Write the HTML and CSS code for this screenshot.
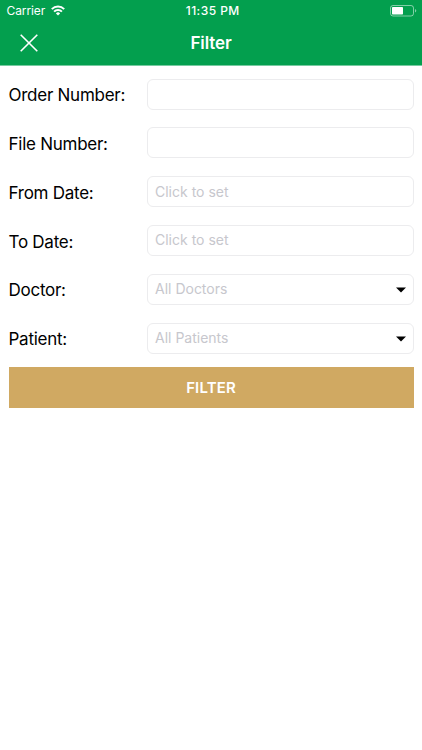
FILE: index.html
```html
<!DOCTYPE html>
<html lang="en">
<head>
<meta charset="utf-8">
<title>Filter</title>
<link rel="stylesheet" href="styles.css">
</head>
<body>
<header class="header">
  <div class="status">
    <div class="carrier"><span>Carrier</span>
      <svg width="14" height="11" viewBox="0 0 14 11" fill="none" stroke="#fff" stroke-width="2"><path d="M.8 4.1a8.8 8.8 0 0 1 12.4 0M3.1 6.6a5.5 5.5 0 0 1 7.8 0"/><path d="M4.9 8.4a3 3 0 0 1 4.2 0L7 10.5z" fill="#fff" stroke="none"/></svg>
    </div>
    <span class="time">11:35 PM</span>
    <svg class="battery" width="27" height="12" viewBox="0 0 27 12"><rect x=".5" y=".5" width="23" height="10.5" rx="2.5" fill="none" stroke="#fff" stroke-opacity=".5"/><rect x="2" y="2" width="11" height="7.5" rx=".7" fill="#fff"/><path d="M25 4v3.6q1.3-.5 1.3-1.8T25 4z" fill="#fff" fill-opacity=".5"/></svg>
  </div>
  <div class="navbar">
    <svg class="close" width="18" height="18" viewBox="0 0 18 18" stroke="#fff" stroke-width="1.6"><path d="M.7.7l16.6 16.6M17.3.7L.7 17.3"/></svg>
    <h1 class="title">Filter</h1>
    <span></span>
  </div>
</header>
<main class="form">
  <div class="row"><span class="label">Order Number:</span><div class="field"></div></div>
  <div class="row"><span class="label">File Number:</span><div class="field"></div></div>
  <div class="row"><span class="label">From Date:</span><div class="field"><span class="hint">Click to set</span></div></div>
  <div class="row"><span class="label">To Date:</span><div class="field"><span class="hint">Click to set</span></div></div>
  <div class="row"><span class="label">Doctor:</span><div class="field"><span class="hint">All Doctors</span><svg class="arrow" width="10" height="6" viewBox="0 0 10 6"><path d="M0 .4h10L5 5.6z"/></svg></div></div>
  <div class="row"><span class="label">Patient:</span><div class="field"><span class="hint">All Patients</span><svg class="arrow" width="10" height="6" viewBox="0 0 10 6"><path d="M0 .4h10L5 5.6z"/></svg></div></div>
  <div class="submit">FILTER</div>
</main>
</body>
</html>
```
FILE: styles.css
```css
* { box-sizing: border-box; }
body { margin: 0; background: #fff; color: #000; font-family: Inter, "Liberation Sans", sans-serif; }
svg { display: block; flex: none; }
.header { height: 66px; background: #039f4e; color: #fff; border-bottom: 1px solid #76caa0; }
.status { height: 21.5px; padding: 0 5px 0 6.5px; display: grid; grid-template-columns: 1fr auto 1fr; align-items: center; }
.carrier { display: flex; align-items: center; gap: 6px; font-size: 12px; letter-spacing: -.1px; }
.time { font-size: 12px; font-weight: 500; letter-spacing: .45px; transform: translateX(1px); }
.battery { justify-self: end; }
.navbar { height: 42px; padding: 0 20px; display: grid; grid-template-columns: 1fr auto 1fr; align-items: center; }
.title { margin: 0; font-size: 17px; font-weight: 600; letter-spacing: -.1px; }
.form { padding: 3.7px 8.5px 0; }
.row { height: 48.85px; display: grid; grid-template-columns: 138.5px 1fr; align-items: center; }
.label { font-size: 17px; letter-spacing: -.26px; white-space: nowrap; padding-top: 2px; }
.field { height: 31px; border: 1px solid #ececee; border-radius: 6px; padding: 0 7px; display: flex; align-items: center; justify-content: space-between; }
.hint { color: #c7c7cd; font-size: 14px; padding-bottom: 1.4px; }
.arrow { margin-top: 1px; }
.submit { margin-top: 4px; height: 41px; background: #d0a962; color: #fff; display: flex; align-items: center; justify-content: center; font-size: 15px; font-weight: 600; letter-spacing: .15px; }
```
